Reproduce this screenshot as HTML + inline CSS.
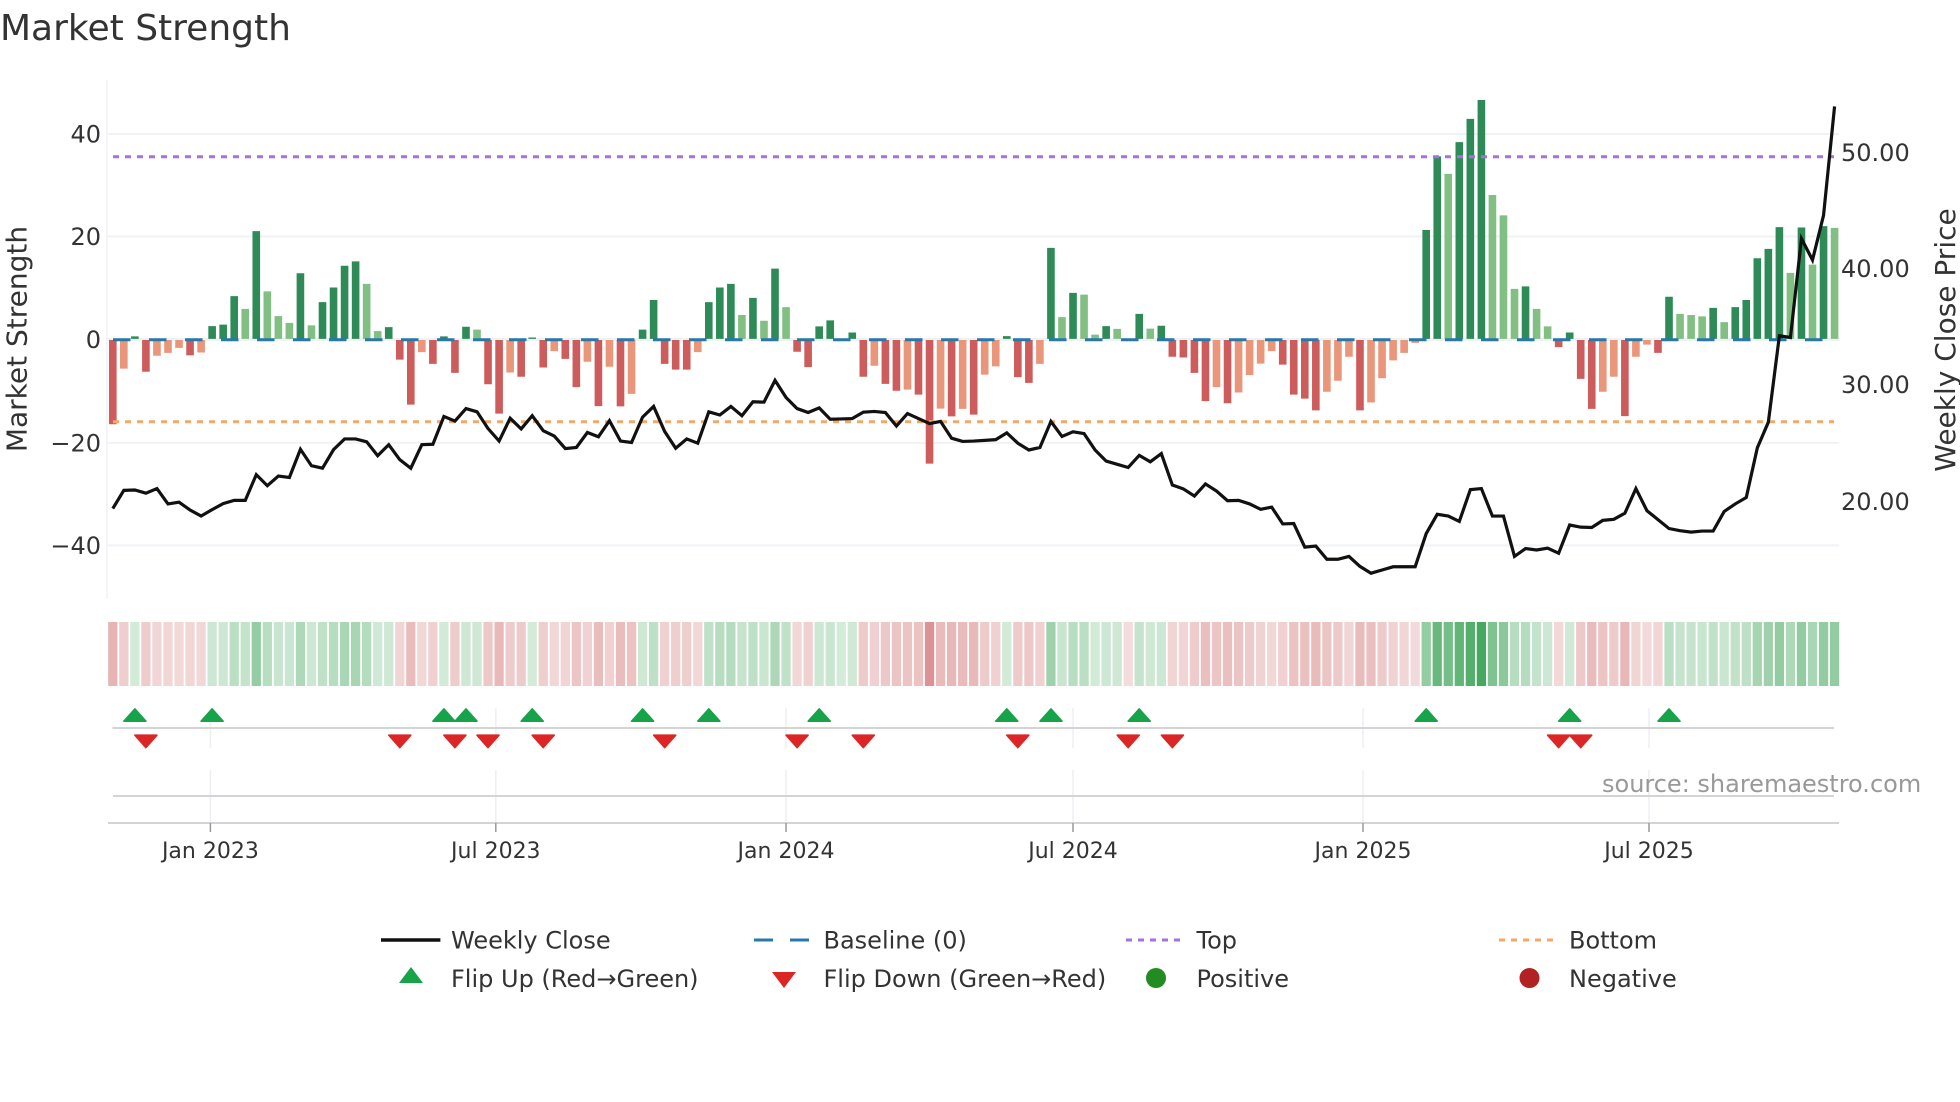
<!DOCTYPE html>
<html lang="en">
<head>
<meta charset="utf-8">
<title>Market Strength</title>
<style>
html,body{margin:0;padding:0;background:#fff;width:1960px;height:1102px;overflow:hidden}
svg{display:block;font-family:"DejaVu Sans",sans-serif}
.r{stroke:rgb(190,50,50);opacity:.85}
.g{stroke:rgb(30,150,60);opacity:.95}
text{fill:#333}
</style>
</head>
<body>
<svg width="1960" height="1102" viewBox="0 0 1960 1102" xmlns="http://www.w3.org/2000/svg">
<defs>
<polygon id="u" points="0,708.9 -11,721.2 11,721.2" fill="#16a34a" stroke="#16a34a" stroke-width="1.6" stroke-linejoin="round"/>
<polygon id="d" points="-11,735.2 11,735.2 0,747.6" fill="#dc2626" stroke="#dc2626" stroke-width="1.6" stroke-linejoin="round"/>
</defs>
<rect width="1960" height="1102" fill="#fff"/>

<text x="0" y="40" font-size="36">Market Strength</text>

<!-- gridlines -->
<g stroke="#f0f2f5" stroke-width="2" fill="none">
<path d="M108 134H1839M108 236.4H1839M108 442.9H1839M108 545.4H1839"/>
<path d="M108 339.5H1839" stroke="#edf3f5" stroke-width="3"/>
<path d="M107 80V599" stroke-width="1.5"/>
</g>

<!-- bars -->
<g transform="translate(112.8,60) scale(11.037,.35714)" fill="none" stroke-width=".69">
<path stroke="#2e8b57" d="M2 781V774M9 781V745M10 781V741M11 781V661M13 781V479M17 781V597M19 781V678M20 781V637M21 781V576M22 781V564M25 781V748M30 781V774M32 781V747M38 781V777M48 781V755M49 781V672M54 781V678M55 781V637M56 781V627M58 781V666M60 781V584M64 781V746M65 781V729M67 781V763M81 781V773M85 781V526M87 781V652M90 781V745M93 781V711M95 781V744M119 781V476M120 781V270M122 781V230M123 781V165M124 781V112M128 781V634M132 781V763M141 781V663M145 781V694M147 781V692M148 781V672M149 781V555M150 781V529M151 781V468M153 781V469M155 781V465"/>
<path stroke="#82bf82" d="M12 781V697M14 781V648M15 781V717M16 781V736M18 781V743M23 781V627M24 781V759M33 781V755M57 781V714M59 781V730M61 781V692M86 781V720M88 781V657M89 781V769M91 781V753M94 781V752M121 781V319M125 781V378M126 781V435M127 781V641M129 781V697M130 781V746M142 781V711M143 781V714M144 781V718M146 781V734M152 781V596M154 781V573M156 781V470"/>
<path stroke="#cd5c5c" d="M0 784V1020M3 784V873M7 784V827M26 784V839M27 784V965M29 784V851M31 784V876M34 784V908M35 784V990M37 784V887M39 784V861M41 784V837M42 784V916M44 784V969M46 784V970M50 784V851M51 784V867M52 784V867M62 784V817M63 784V860M68 784V887M70 784V907M71 784V926M73 784V937M74 784V1130M76 784V998M78 784V993M82 784V888M83 784V904M96 784V831M97 784V833M98 784V876M99 784V955M101 784V961M106 784V853M107 784V937M108 784V948M109 784V981M113 784V981M131 784V804M133 784V893M134 784V977M137 784V997M140 784V820"/>
<path stroke="#e9967a" d="M1 784V864M4 784V828M5 784V820M6 784V806M8 784V819M28 784V818M36 784V875M40 784V815M43 784V845M45 784V859M47 784V935M53 784V818M69 784V856M72 784V923M75 784V976M77 784V977M79 784V881M80 784V858M84 784V851M100 784V916M102 784V931M103 784V882M104 784V850M105 784V815M110 784V929M111 784V898M112 784V831M114 784V959M115 784V891M116 784V841M117 784V820M118 784V792M135 784V929M136 784V887M138 784V831M139 784V797"/>
</g>

<!-- reference lines -->
<path d="M113 339.7H1834" stroke="#2978a8" stroke-width="3" stroke-dasharray="17.5 18.5" fill="none"/>
<path d="M113 156.8H1834" stroke="#a472dd" stroke-width="3" stroke-dasharray="6 6" fill="none"/>
<path d="M113 421.8H1834" stroke="#f4a868" stroke-width="3" stroke-dasharray="6 6" fill="none"/>

<!-- weekly close -->
<g transform="translate(112.8,60) scale(11.037,.35714)">
<polyline fill="none" stroke="#111" stroke-width="3.2" vector-effect="non-scaling-stroke" stroke-linejoin="miter" points="0,1256 1,1205 2,1204 3,1213 4,1200 5,1243 6,1238 7,1260 8,1277 9,1259 10,1242 11,1233 12,1233 13,1161 14,1192 15,1165 16,1169 17,1090 18,1136 19,1143 20,1091 21,1061 22,1061 23,1069 24,1108 25,1077 26,1119 27,1143 28,1077 29,1076 30,998 31,1011 32,976 33,985 34,1032 35,1067 36,1003 37,1033 38,996 39,1038 40,1053 41,1088 42,1085 43,1043 44,1055 45,1010 46,1067 47,1071 48,1000 49,970 50,1040 51,1087 52,1061 53,1073 54,985 55,994 56,970 57,996 58,957 59,958 60,897 61,945 62,976 63,987 64,974 65,1006 66,1005 67,1004 68,986 69,984 70,987 71,1025 72,990 73,1004 74,1018 75,1012 76,1059 77,1068 78,1067 79,1065 80,1063 81,1044 82,1073 83,1092 84,1085 85,1012 86,1054 87,1041 88,1046 89,1092 90,1123 91,1132 92,1141 93,1107 94,1125 95,1102 96,1190 97,1201 98,1221 99,1187 100,1207 101,1234 102,1233 103,1243 104,1258 105,1252 106,1299 107,1298 108,1364 109,1361 110,1398 111,1398 112,1390 113,1418 114,1437 115,1428 116,1419 117,1419 118,1419 119,1326 120,1272 121,1277 122,1292 123,1203 124,1200 125,1277 126,1277 127,1390 128,1368 129,1372 130,1367 131,1381 132,1302 133,1308 134,1309 135,1289 136,1286 137,1269 138,1200 139,1262 140,1287 141,1312 142,1318 143,1322 144,1319 145,1319 146,1264 147,1243 148,1225 149,1086 150,1014 151,772 152,777 153,500 154,560 155,435 156,130"/>
</g>

<!-- axis tick labels -->
<g font-size="24" text-anchor="end">
<text x="101" y="142.5">40</text>
<text x="101" y="245">20</text>
<text x="101" y="348">0</text>
<text x="101" y="451.5">−20</text>
<text x="101" y="554">−40</text>
</g>
<g font-size="24">
<text x="1841" y="161">50.00</text>
<text x="1841" y="277">40.00</text>
<text x="1841" y="393">30.00</text>
<text x="1841" y="510">20.00</text>
</g>
<text transform="translate(26.5,339) rotate(-90)" font-size="28" text-anchor="middle">Market Strength</text>
<text transform="translate(1955,340) rotate(-90)" font-size="28" text-anchor="middle">Weekly Close Price</text>

<!-- heat strip -->
<g transform="translate(112.8,622) scale(11.037,64)" fill="none" stroke-width=".84">
<path class="r" stroke-opacity=".43" d="M0 0V1"/><path class="r" stroke-opacity=".28" d="M1 0V1"/><path class="g" stroke-opacity=".21" d="M2 0V1"/><path class="r" stroke-opacity=".29" d="M3 0V1"/><path class="r" stroke-opacity=".24" d="M4 0V1"/><path class="r" stroke-opacity=".24" d="M5 0V1"/><path class="r" stroke-opacity=".22" d="M6 0V1"/><path class="r" stroke-opacity=".24" d="M7 0V1"/><path class="r" stroke-opacity=".23" d="M8 0V1"/><path class="g" stroke-opacity=".24" d="M9 0V1"/>
<path class="g" stroke-opacity=".24" d="M10 0V1"/><path class="g" stroke-opacity=".32" d="M11 0V1"/><path class="g" stroke-opacity=".28" d="M12 0V1"/><path class="g" stroke-opacity=".5" d="M13 0V1"/><path class="g" stroke-opacity=".33" d="M14 0V1"/><path class="g" stroke-opacity=".26" d="M15 0V1"/><path class="g" stroke-opacity=".25" d="M16 0V1"/><path class="g" stroke-opacity=".38" d="M17 0V1"/><path class="g" stroke-opacity=".24" d="M18 0V1"/><path class="g" stroke-opacity=".3" d="M19 0V1"/>
<path class="g" stroke-opacity=".34" d="M20 0V1"/><path class="g" stroke-opacity=".4" d="M21 0V1"/><path class="g" stroke-opacity=".41" d="M22 0V1"/><path class="g" stroke-opacity=".35" d="M23 0V1"/><path class="g" stroke-opacity=".22" d="M24 0V1"/><path class="g" stroke-opacity=".23" d="M25 0V1"/><path class="r" stroke-opacity=".25" d="M26 0V1"/><path class="r" stroke-opacity=".38" d="M27 0V1"/><path class="r" stroke-opacity=".23" d="M28 0V1"/><path class="r" stroke-opacity=".27" d="M29 0V1"/>
<path class="g" stroke-opacity=".21" d="M30 0V1"/><path class="r" stroke-opacity=".29" d="M31 0V1"/><path class="g" stroke-opacity=".23" d="M32 0V1"/><path class="g" stroke-opacity=".23" d="M33 0V1"/><path class="r" stroke-opacity=".32" d="M34 0V1"/><path class="r" stroke-opacity=".4" d="M35 0V1"/><path class="r" stroke-opacity=".29" d="M36 0V1"/><path class="r" stroke-opacity=".3" d="M37 0V1"/><path class="g" stroke-opacity=".2" d="M38 0V1"/><path class="r" stroke-opacity=".28" d="M39 0V1"/>
<path class="r" stroke-opacity=".23" d="M40 0V1"/><path class="r" stroke-opacity=".25" d="M41 0V1"/><path class="r" stroke-opacity=".33" d="M42 0V1"/><path class="r" stroke-opacity=".26" d="M43 0V1"/><path class="r" stroke-opacity=".38" d="M44 0V1"/><path class="r" stroke-opacity=".27" d="M45 0V1"/><path class="r" stroke-opacity=".38" d="M46 0V1"/><path class="r" stroke-opacity=".35" d="M47 0V1"/><path class="g" stroke-opacity=".23" d="M48 0V1"/><path class="g" stroke-opacity=".31" d="M49 0V1"/>
<path class="r" stroke-opacity=".27" d="M50 0V1"/><path class="r" stroke-opacity=".28" d="M51 0V1"/><path class="r" stroke-opacity=".28" d="M52 0V1"/><path class="r" stroke-opacity=".23" d="M53 0V1"/><path class="g" stroke-opacity=".3" d="M54 0V1"/><path class="g" stroke-opacity=".34" d="M55 0V1"/><path class="g" stroke-opacity=".35" d="M56 0V1"/><path class="g" stroke-opacity=".27" d="M57 0V1"/><path class="g" stroke-opacity=".31" d="M58 0V1"/><path class="g" stroke-opacity=".25" d="M59 0V1"/>
<path class="g" stroke-opacity=".39" d="M60 0V1"/><path class="g" stroke-opacity=".29" d="M61 0V1"/><path class="r" stroke-opacity=".23" d="M62 0V1"/><path class="r" stroke-opacity=".27" d="M63 0V1"/><path class="g" stroke-opacity=".24" d="M64 0V1"/><path class="g" stroke-opacity=".25" d="M65 0V1"/><path class="g" stroke-opacity=".2" d="M66 0V1"/><path class="g" stroke-opacity=".22" d="M67 0V1"/><path class="r" stroke-opacity=".3" d="M68 0V1"/><path class="r" stroke-opacity=".27" d="M69 0V1"/>
<path class="r" stroke-opacity=".32" d="M70 0V1"/><path class="r" stroke-opacity=".34" d="M71 0V1"/><path class="r" stroke-opacity=".34" d="M72 0V1"/><path class="r" stroke-opacity=".35" d="M73 0V1"/><path class="r" stroke-opacity=".62" d="M74 0V1"/><path class="r" stroke-opacity=".39" d="M75 0V1"/><path class="r" stroke-opacity=".41" d="M76 0V1"/><path class="r" stroke-opacity=".39" d="M77 0V1"/><path class="r" stroke-opacity=".4" d="M78 0V1"/><path class="r" stroke-opacity=".3" d="M79 0V1"/>
<path class="r" stroke-opacity=".27" d="M80 0V1"/><path class="g" stroke-opacity=".21" d="M81 0V1"/><path class="r" stroke-opacity=".3" d="M82 0V1"/><path class="r" stroke-opacity=".32" d="M83 0V1"/><path class="r" stroke-opacity=".27" d="M84 0V1"/><path class="g" stroke-opacity=".45" d="M85 0V1"/><path class="g" stroke-opacity=".26" d="M86 0V1"/><path class="g" stroke-opacity=".33" d="M87 0V1"/><path class="g" stroke-opacity=".32" d="M88 0V1"/><path class="g" stroke-opacity=".21" d="M89 0V1"/>
<path class="g" stroke-opacity=".24" d="M90 0V1"/><path class="g" stroke-opacity=".23" d="M91 0V1"/><path class="r" stroke-opacity=".2" d="M92 0V1"/><path class="g" stroke-opacity=".27" d="M93 0V1"/><path class="g" stroke-opacity=".23" d="M94 0V1"/><path class="g" stroke-opacity=".24" d="M95 0V1"/><path class="r" stroke-opacity=".25" d="M96 0V1"/><path class="r" stroke-opacity=".25" d="M97 0V1"/><path class="r" stroke-opacity=".29" d="M98 0V1"/><path class="r" stroke-opacity=".37" d="M99 0V1"/>
<path class="r" stroke-opacity=".33" d="M100 0V1"/><path class="r" stroke-opacity=".37" d="M101 0V1"/><path class="r" stroke-opacity=".34" d="M102 0V1"/><path class="r" stroke-opacity=".3" d="M103 0V1"/><path class="r" stroke-opacity=".26" d="M104 0V1"/><path class="r" stroke-opacity=".23" d="M105 0V1"/><path class="r" stroke-opacity=".27" d="M106 0V1"/><path class="r" stroke-opacity=".35" d="M107 0V1"/><path class="r" stroke-opacity=".36" d="M108 0V1"/><path class="r" stroke-opacity=".39" d="M109 0V1"/>
<path class="r" stroke-opacity=".34" d="M110 0V1"/><path class="r" stroke-opacity=".31" d="M111 0V1"/><path class="r" stroke-opacity=".25" d="M112 0V1"/><path class="r" stroke-opacity=".39" d="M113 0V1"/><path class="r" stroke-opacity=".37" d="M114 0V1"/><path class="r" stroke-opacity=".3" d="M115 0V1"/><path class="r" stroke-opacity=".26" d="M116 0V1"/><path class="r" stroke-opacity=".24" d="M117 0V1"/><path class="r" stroke-opacity=".21" d="M118 0V1"/><path class="g" stroke-opacity=".5" d="M119 0V1"/>
<path class="g" stroke-opacity=".7" d="M120 0V1"/><path class="g" stroke-opacity=".65" d="M121 0V1"/><path class="g" stroke-opacity=".74" d="M122 0V1"/><path class="g" stroke-opacity=".8" d="M123 0V1"/><path class="g" stroke-opacity=".86" d="M124 0V1"/><path class="g" stroke-opacity=".6" d="M125 0V1"/><path class="g" stroke-opacity=".54" d="M126 0V1"/><path class="g" stroke-opacity=".34" d="M127 0V1"/><path class="g" stroke-opacity=".35" d="M128 0V1"/><path class="g" stroke-opacity=".28" d="M129 0V1"/>
<path class="g" stroke-opacity=".24" d="M130 0V1"/><path class="r" stroke-opacity=".22" d="M131 0V1"/><path class="g" stroke-opacity=".22" d="M132 0V1"/><path class="r" stroke-opacity=".31" d="M133 0V1"/><path class="r" stroke-opacity=".39" d="M134 0V1"/><path class="r" stroke-opacity=".34" d="M135 0V1"/><path class="r" stroke-opacity=".3" d="M136 0V1"/><path class="r" stroke-opacity=".41" d="M137 0V1"/><path class="r" stroke-opacity=".25" d="M138 0V1"/><path class="r" stroke-opacity=".21" d="M139 0V1"/>
<path class="r" stroke-opacity=".24" d="M140 0V1"/><path class="g" stroke-opacity=".32" d="M141 0V1"/><path class="g" stroke-opacity=".27" d="M142 0V1"/><path class="g" stroke-opacity=".27" d="M143 0V1"/><path class="g" stroke-opacity=".26" d="M144 0V1"/><path class="g" stroke-opacity=".29" d="M145 0V1"/><path class="g" stroke-opacity=".25" d="M146 0V1"/><path class="g" stroke-opacity=".29" d="M147 0V1"/><path class="g" stroke-opacity=".31" d="M148 0V1"/><path class="g" stroke-opacity=".42" d="M149 0V1"/>
<path class="g" stroke-opacity=".45" d="M150 0V1"/><path class="g" stroke-opacity=".51" d="M151 0V1"/><path class="g" stroke-opacity=".38" d="M152 0V1"/><path class="g" stroke-opacity=".51" d="M153 0V1"/><path class="g" stroke-opacity=".4" d="M154 0V1"/><path class="g" stroke-opacity=".51" d="M155 0V1"/><path class="g" stroke-opacity=".51" d="M156 0V1"/>
</g>

<!-- lower panels -->
<g stroke="#edeff3" stroke-width="1.5" fill="none">
<path d="M210.4 708V748M210.4 770V823M495.8 708V748M495.8 770V823M786 708V748M786 770V823M1073 708V748M1073 770V823M1363 708V748M1363 770V823M1649 708V748M1649 770V823"/>
</g>
<g stroke="#d2d4d8" stroke-width="2" fill="none">
<path d="M112.5 728H1834M113 796H1834M108 823H1839"/>
</g>
<g stroke="#999" stroke-width="1.5" fill="none">
<path d="M210.4 823V832M495.8 823V832M786 823V832M1073 823V832M1363 823V832M1649 823V832"/>
</g>

<use href="#u" x="134.9"/><use href="#u" x="212.1"/><use href="#u" x="443.9"/><use href="#u" x="466"/><use href="#u" x="532.2"/><use href="#u" x="642.6"/><use href="#u" x="708.8"/><use href="#u" x="819.2"/><use href="#u" x="1006.8"/><use href="#u" x="1051"/><use href="#u" x="1139.2"/><use href="#u" x="1426.2"/><use href="#u" x="1569.7"/><use href="#u" x="1669"/>
<use href="#d" x="145.9"/><use href="#d" x="399.8"/><use href="#d" x="454.9"/><use href="#d" x="488"/><use href="#d" x="543.2"/><use href="#d" x="664.7"/><use href="#d" x="797.1"/><use href="#d" x="863.3"/><use href="#d" x="1017.8"/><use href="#d" x="1128.2"/><use href="#d" x="1172.4"/><use href="#d" x="1558.6"/><use href="#d" x="1580.7"/>

<text x="1602" y="792" font-size="24" style="fill:#999">source: sharemaestro.com</text>

<g font-size="22" text-anchor="middle">
<text x="210.4" y="858">Jan 2023</text>
<text x="495.8" y="858">Jul 2023</text>
<text x="786" y="858">Jan 2024</text>
<text x="1073" y="858">Jul 2024</text>
<text x="1363" y="858">Jan 2025</text>
<text x="1649" y="858">Jul 2025</text>
</g>

<!-- legend -->
<path d="M381 940H440.4" stroke="#111" stroke-width="3.5" fill="none"/>
<path d="M754 940H773M790 940H809" stroke="#2978a8" stroke-width="3" fill="none"/>
<path d="M1126 940H1182" stroke="#a472dd" stroke-width="3" stroke-dasharray="6 6" fill="none"/>
<path d="M1499 940H1555" stroke="#f4a868" stroke-width="3" stroke-dasharray="6 6" fill="none"/>
<polygon points="411,967 423,983 399,983" fill="#16a34a"/>
<polygon points="772,972 796,972 784,988" fill="#dc2626"/>
<circle cx="1156" cy="978" r="10" fill="#228b22"/>
<circle cx="1529.5" cy="978" r="10" fill="#b22222"/>
<g font-size="24">
<text x="451" y="948.5">Weekly Close</text>
<text x="823.5" y="948.5">Baseline (0)</text>
<text x="1196.5" y="948.5">Top</text>
<text x="1569" y="948.5">Bottom</text>
<text x="451" y="987">Flip Up (Red→Green)</text>
<text x="823.5" y="987">Flip Down (Green→Red)</text>
<text x="1196.5" y="987">Positive</text>
<text x="1569" y="987">Negative</text>
</g>
</svg>
</body>
</html>
